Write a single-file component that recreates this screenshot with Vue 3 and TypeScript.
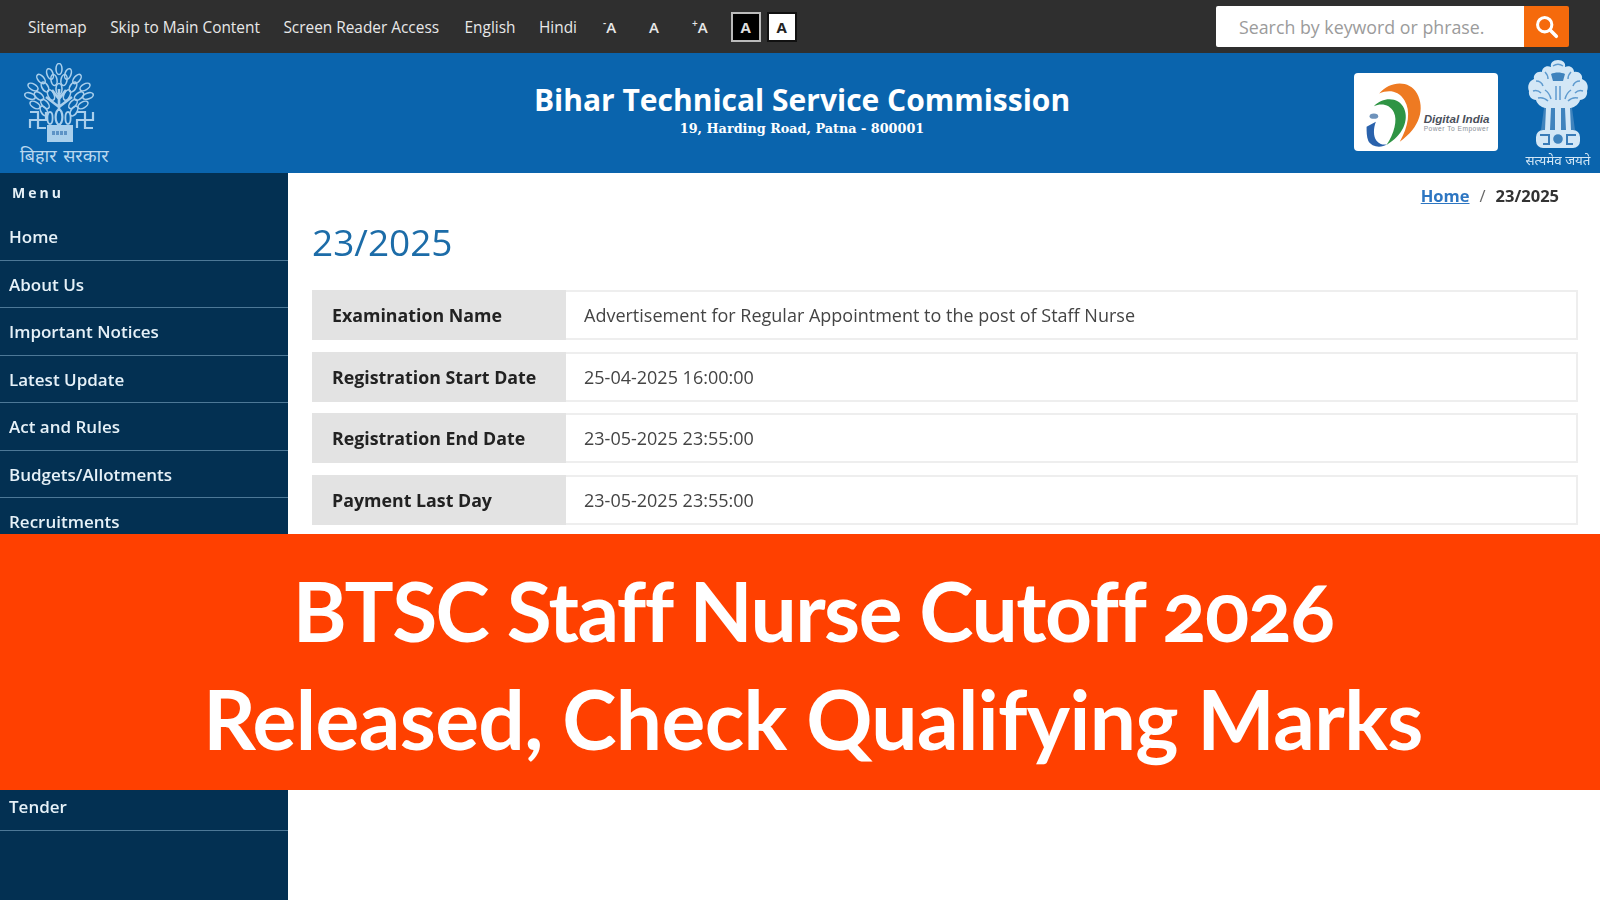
<script setup lang="ts">
const topLinks = ['Sitemap', 'Skip to Main Content', 'Screen Reader Access', 'English', 'Hindi']

// rows between Recruitments and Tender sit under the banner, so they stay empty
const menuItems = [
  'Home',
  'About Us',
  'Important Notices',
  'Latest Update',
  'Act and Rules',
  'Budgets/Allotments',
  'Recruitments',
  '',
  '',
  '',
  '',
  '',
  'Tender',
]

const examRows = [
  { label: 'Examination Name', value: 'Advertisement for Regular Appointment to the post of Staff Nurse' },
  { label: 'Registration Start Date', value: '25-04-2025 16:00:00' },
  { label: 'Registration End Date', value: '23-05-2025 23:55:00' },
  { label: 'Payment Last Day', value: '23-05-2025 23:55:00' },
]

// leaves of the Bihar seal tree: x, y, rotation
const leaves: [number, number, number][] = [
  [39, 4, 0], [30, 9, -20], [48, 9, 20], [21, 14, -40], [57, 14, 40],
  [34, 15, -10], [44, 15, 10], [13, 22, -60], [65, 22, 60], [25, 22, -30],
  [53, 22, 30], [39, 24, 0], [10, 31, -70], [68, 31, 70], [19, 31, -50],
  [59, 31, 50], [31, 30, -25], [47, 30, 25], [15, 40, -60], [63, 40, 60],
  [25, 39, -40], [53, 39, 40], [24, 46, -30], [54, 46, 30],
]
</script>

<template>
  <div class="page">
    <div class="site">
      <div class="topbar">
        <nav class="top-links">
          <a v-for="link in topLinks" :key="link">{{ link }}</a>
        </nav>
        <div class="font-tools">
          <span class="size"><sup>-</sup>A</span>
          <span class="size">A</span>
          <span class="size"><sup>+</sup>A</span>
        </div>
        <div class="contrast">
          <span class="swatch dark">A</span>
          <span class="swatch light">A</span>
        </div>
        <form class="search">
          <input type="text" placeholder="Search by keyword or phrase." />
          <button type="button" aria-label="Search">
            <svg width="25" height="25" viewBox="0 0 28 28" fill="none" stroke="#fff">
              <circle cx="12" cy="12" r="8" stroke-width="3.4" />
              <path d="M18 18l7 7" stroke-width="4" stroke-linecap="round" />
            </svg>
          </button>
        </form>
      </div>

      <header class="header">
        <div class="seal">
          <svg width="80" height="84" viewBox="0 -2 80 84" fill="none" stroke="#a9cfec">
            <ellipse
              v-for="(leaf, i) in leaves"
              :key="i"
              :cx="leaf[0]"
              :cy="leaf[1]"
              rx="3"
              ry="5.5"
              stroke-width="1.6"
              :transform="`rotate(${leaf[2]} ${leaf[0]} ${leaf[1]})`"
            />
            <path d="M39 46V24M39 42L26 32M39 42l13-10M39 34l-7-9M39 34l7-9" stroke-width="2.6" />
            <ellipse cx="39" cy="52" rx="3.4" ry="7.5" stroke-width="2.2" />
            <ellipse cx="30" cy="53" rx="2.6" ry="6" stroke-width="1.8" />
            <ellipse cx="48" cy="53" rx="2.6" ry="6" stroke-width="1.8" />
            <path d="M10 47h8v16h8M10 63v-8h16v-8" stroke-width="2.2" />
            <path d="M57 47h8v16h8M57 63v-8h16v-8" stroke-width="2.2" />
            <rect x="27" y="60" width="26" height="17" fill="#a9cfec" stroke="none" />
            <path d="M32 68h16" stroke="#5d93c6" stroke-width="4" stroke-dasharray="3 1" />
          </svg>
          <span class="seal-name">बिहार सरकार</span>
        </div>

        <div class="heading">
          <h1>Bihar Technical Service Commission</h1>
          <p>19, Harding Road, Patna - 800001</p>
        </div>

        <div class="logos">
          <div class="digital-card">
            <svg width="144" height="78" viewBox="15 8 428 235">
              <path
                d="M88 70C120 32 178 28 202 70C226 115 212 172 150 215C176 170 184 122 164 90C145 60 115 58 88 70Z"
                fill="#ee7a22"
              />
              <path
                d="M72 108C100 78 148 80 163 115C178 150 160 195 110 225C133 190 144 150 132 126C120 103 95 98 72 108Z"
                fill="#2f9444"
              />
              <path
                d="M50 170L78 155C70 175 70 200 80 212C90 225 105 225 112 222C95 235 65 232 55 212C50 200 50 185 50 170Z"
                fill="#2a62ac"
              />
              <ellipse cx="72" cy="138" rx="13" ry="8" fill="#6f93bb" />
              <text x="222" y="159" class="digital-name">Digital India</text>
              <text x="222" y="182" class="digital-tag">Power To Empower</text>
            </svg>
          </div>
          <div class="emblem">
            <svg width="62" height="90" viewBox="0 0 62 90" fill="#d3e7f6">
              <path
                d="M31 0C36 0 39 3 38 7C43 5 47 8 47 12C52 11 56 15 55 19C60 21 62 26 60 31C61 36 57 40 53 40C52 44 48 47 44 48H18C14 47 10 44 9 40C5 40 1 36 2 31C0 26 2 21 7 19C6 15 10 11 15 12C15 8 19 5 24 7C23 3 26 0 31 0Z"
              />
              <g fill="none" stroke="#5f9bcf" stroke-width="1.5">
                <path d="M26 6c3-2 7-2 10 0M18 12c2 2 3 4 3 7M44 12c-2 2-3 4-3 7M9 21c3 0 6 2 7 5M53 21c-3 0-6 2-7 5" />
                <path d="M6 31c3-1 6 0 8 2M56 31c-3-1-6 0-8 2M11 38c4-1 7 0 10 3M51 38c-4-1-7 0-10 3M18 30c3 2 5 5 6 9M44 30c-3 2-5 5-6 9" />
                <path d="M29 26v14M33 26v14" />
              </g>
              <path d="M24 14c4-2 10-2 14 0l-2 7h-10z" fill="#3f83bd" />
              <path d="M17 48h28l3 22H14z" fill="#3f83bd" />
              <path d="M19 48l-1 22h5l1-22zM28 48v22h6V48zM38 48l1 22h5l-1-22z" />
              <rect x="9" y="70" width="44" height="18" rx="7" />
              <path d="M13 75h9v9h-6M49 75h-9v9h6" fill="none" stroke="#3a7cb8" stroke-width="2" />
              <circle cx="31" cy="79" r="5.5" fill="#3f83bd" stroke="#d3e7f6" stroke-width="1.4" />
            </svg>
            <span class="emblem-motto">सत्यमेव जयते</span>
          </div>
        </div>
      </header>

      <div class="layout">
        <aside class="sidebar">
          <div class="menu-title">Menu</div>
          <ul class="menu">
            <li v-for="(item, i) in menuItems" :key="i">{{ item }}</li>
          </ul>
        </aside>

        <main class="content">
          <div class="crumbs">
            <a>Home</a>
            <span class="sep">/</span>
            <span class="current">23/2025</span>
          </div>
          <h2>23/2025</h2>
          <div class="rows">
            <div v-for="row in examRows" :key="row.label" class="row">
              <div class="row-label">{{ row.label }}</div>
              <div class="row-value">{{ row.value }}</div>
            </div>
          </div>
        </main>
      </div>
    </div>

    <div class="banner">
      <div class="banner-top">BTSC Staff Nurse Cutoff 2026</div>
      <div>Released, Check Qualifying Marks</div>
    </div>
  </div>
</template>

<style scoped>
.page {
  position: relative;
  width: 1600px;
  height: 900px;
  overflow: hidden;
  font-family: 'Open Sans', 'Noto Sans', sans-serif;
  background: #fff;
}

.site {
  height: 900px;
  display: flex;
  flex-direction: column;
  filter: blur(0.5px);
}

.topbar {
  height: 53px;
  flex: none;
  display: flex;
  align-items: center;
  padding-left: 28px;
  background: #2f2f2f;
  color: #e8e8e8;
  font-size: 15.4px;
}

.top-links {
  display: flex;
  gap: 23.5px;
  padding-top: 2px;
}

.top-links a:nth-child(4) {
  margin-left: 2px;
}

.font-tools {
  display: flex;
  gap: 33px;
  margin-left: 26px;
  font-size: 15px;
  font-weight: 600;
}

.size sup {
  font-size: 10px;
  line-height: 0;
}

.contrast {
  display: flex;
  gap: 6px;
  margin-left: 23px;
}

.swatch {
  width: 30px;
  height: 30px;
  box-sizing: border-box;
  display: flex;
  align-items: center;
  justify-content: center;
  font-size: 15px;
  font-weight: 700;
}

.swatch.dark {
  background: #000;
  color: #ddd;
  border: 2px solid #bbb;
}

.swatch.light {
  background: #fff;
  color: #222;
  border: 2px solid #111;
}

.search {
  display: flex;
  height: 41px;
  margin-left: auto;
  margin-right: 31px;
}

.search input {
  width: 308px;
  box-sizing: border-box;
  padding: 0 0 0 23px;
  border: none;
  outline: none;
  border-radius: 2px 0 0 2px;
  background: #fff;
  font-family: inherit;
  font-size: 17.8px;
}

.search input::placeholder {
  color: #9b9b9b;
  opacity: 1;
}

.search button {
  width: 45px;
  padding: 0;
  border: none;
  border-radius: 0 2px 2px 0;
  background: #f56a0c;
  display: flex;
  align-items: center;
  justify-content: center;
}

.header {
  height: 120px;
  flex: none;
  display: grid;
  grid-template-columns: 1fr auto 1fr;
  align-items: center;
  background: #0a64ad;
  color: #fff;
}

.seal {
  width: 88px;
  margin-left: 20px;
  padding-top: 10px;
  align-self: start;
  display: flex;
  flex-direction: column;
  align-items: flex-start;
}

.seal-name {
  margin-top: -2px;
  font-size: 18px;
  line-height: 20px;
  word-spacing: 2px;
  color: #b9d8f0;
  white-space: nowrap;
}

.heading {
  padding: 0 0 9px 4px;
  text-align: center;
}

.heading h1 {
  margin: 0;
  font-size: 30px;
  line-height: 40px;
  font-weight: 700;
}

.heading p {
  margin: 0;
  font-family: 'DejaVu Serif', 'Liberation Serif', serif;
  font-size: 12.8px;
  line-height: 17px;
  font-weight: 700;
}

.logos {
  display: flex;
  align-items: center;
  justify-content: flex-end;
  gap: 25px;
  padding-right: 8px;
}

.digital-card {
  width: 144px;
  height: 78px;
  margin-right: 1px;
  margin-bottom: 2px;
  border-radius: 4px;
  background: #fff;
}

.digital-name {
  font-family: 'Liberation Sans', sans-serif;
  font-size: 35px;
  font-weight: 700;
  font-style: italic;
  fill: #4a4f5a;
}

.digital-tag {
  font-family: 'Liberation Sans', sans-serif;
  font-size: 20px;
  letter-spacing: 1.5px;
  fill: #8a8f98;
}

.emblem {
  width: 68px;
  padding-top: 4px;
  display: flex;
  flex-direction: column;
  align-items: center;
}

.emblem-motto {
  font-size: 13.4px;
  line-height: 20px;
  color: #d3e7f6;
  white-space: nowrap;
}

.layout {
  flex: 1;
  display: flex;
  min-height: 0;
}

.sidebar {
  width: 288px;
  flex: none;
  background: #033052;
  color: #e6f1f8;
}

.menu-title {
  height: 40px;
  padding-left: 12px;
  line-height: 40px;
  font-size: 14px;
  font-weight: 700;
  letter-spacing: 3px;
}

.menu {
  margin: 0;
  padding: 0;
  list-style: none;
}

.menu li {
  height: 47.5px;
  box-sizing: border-box;
  padding-left: 9px;
  line-height: 47px;
  border-bottom: 1px solid #4d7897;
  font-size: 17px;
  font-weight: 600;
}

.content {
  flex: 1;
  padding: 0 22px 0 24px;
}

.crumbs {
  display: flex;
  justify-content: flex-end;
  align-items: center;
  gap: 10px;
  height: 45px;
  padding-right: 19px;
  font-size: 16.5px;
  font-weight: 700;
  color: #333;
}

.crumbs a {
  color: #2d76c2;
  text-decoration: underline;
}

.crumbs .sep {
  font-weight: 400;
  color: #666;
}

.content h2 {
  margin: 0;
  height: 72px;
  padding-top: 1px;
  box-sizing: border-box;
  line-height: 46px;
  font-size: 37px;
  font-weight: 500;
  color: #1c6ca8;
}

.rows {
  display: flex;
  flex-direction: column;
  gap: 12px;
}

.row {
  display: grid;
  grid-template-columns: 254px 1fr;
  height: 49.5px;
  font-size: 18px;
}

.row-label {
  padding-left: 20px;
  line-height: 50px;
  font-size: 17.8px;
  font-weight: 700;
  background: #e3e3e3;
  color: #222;
}

.row-value {
  padding-left: 18px;
  line-height: 46px;
  border: 2px solid #eeeeee;
  border-left: none;
  color: #444;
}

.banner {
  position: absolute;
  top: 534px;
  left: 0;
  right: 0;
  height: 256px;
  box-sizing: border-box;
  padding: 22px 0 0 26px;
  background: #ff4000;
  color: #fff;
  text-align: center;
  font-family: Lato, 'Open Sans', sans-serif;
  font-size: 82px;
  line-height: 108px;
  font-weight: 700;
  letter-spacing: -0.6px;
  font-variant-numeric: oldstyle-nums;
}

.banner-top {
  letter-spacing: -1.5px;
}
</style>
